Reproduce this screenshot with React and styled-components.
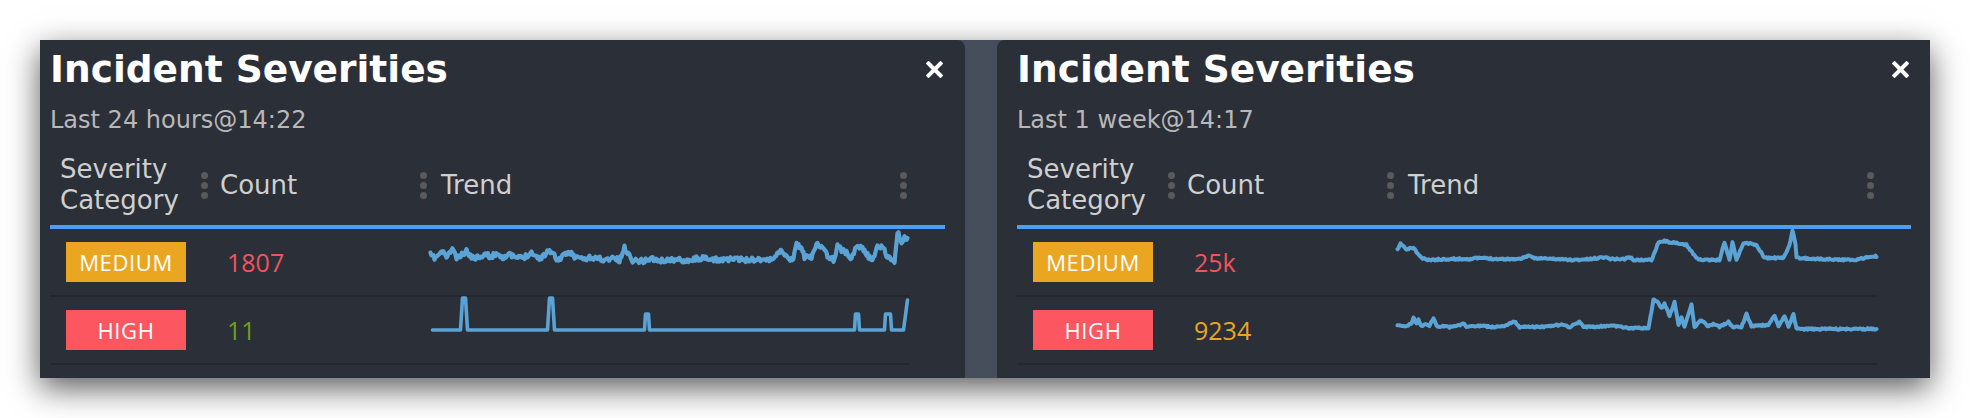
import React from 'react';
import styled, { createGlobalStyle } from 'styled-components';

const GlobalStyle = createGlobalStyle`
  html, body {
    margin: 0;
    padding: 0;
    background: #ffffff;
  }
  body {
    font-family: "DejaVu Sans", "Open Sans", sans-serif;
  }
`;

const Page = styled.div`
  width: 1970px;
  height: 418px;
  padding: 40px 40px 0 40px;
  box-sizing: border-box;
  overflow: hidden;
`;

const Board = styled.div`
  display: flex;
  gap: 32px;
  height: 338px;
  background: linear-gradient(90deg, #3c4250 0%, #464d5b 20%, #464d5b 80%, #3c4250 100%);
  background-color: #434a58;
  box-shadow: 0 10px 30px rgba(0, 0, 0, 0.65);
`;

const Panel = styled.section`
  width: ${p => p.$width}px;
  box-sizing: border-box;
  padding: 7px ${p => p.$padRight}px 0 ${p => p.$padLeft}px;
  background: #2b2f38;
  border-radius: ${p => (p.$side === 'left' ? '0 8px 0 0' : '8px 0 0 0')};
`;

const TitleRow = styled.div`
  display: flex;
  align-items: center;
  justify-content: space-between;
  height: 44px;
`;

const Title = styled.h2`
  margin: 0;
  font-size: 37.5px;
  font-weight: 700;
  line-height: 44px;
  color: #ffffff;
`;

const Close = styled.button`
  display: flex;
  padding: 0;
  margin-right: 2px;
  border: 0;
  background: none;
  cursor: pointer;
`;

const Subtitle = styled.div`
  margin-top: 13px;
  font-size: 24px;
  line-height: 32px;
  color: #b8b8b8;
`;

const Header = styled.div`
  margin-top: 9px;
  height: 80px;
  border-bottom: 4px solid #4a9ff5;
  display: grid;
  grid-template-columns: 151px 219px 490px;
  align-items: center;
`;

const HeadCell = styled.div`
  display: flex;
  align-items: center;
  gap: 12px;
  padding-left: ${p => p.$pad || 0}px;
  font-size: 26px;
  line-height: 31px;
  color: #cfcfcf;
`;

const TrendHead = styled(HeadCell)`
  justify-content: space-between;
  padding-right: 3px;
`;

const HeadLabel = styled.div`
  display: flex;
  align-items: center;
  gap: 14px;
`;

const Grip = styled.span`
  display: flex;
  flex-direction: column;
  gap: 3px;

  &::before, &::after, & > i {
    content: '';
    display: block;
    width: 7px;
    height: 7px;
    border-radius: 50%;
    background: #5a5a5a;
  }
`;

const Row = styled.div`
  width: 860px;
  height: 66px;
  display: grid;
  grid-template-columns: 151px 219px 490px;
  align-items: center;
  border-bottom: 2px solid #23272f;
`;

const Badge = styled.span`
  width: 120px;
  height: 40px;
  margin-left: 16px;
  display: flex;
  align-items: center;
  justify-content: center;
  background: ${p => p.$bg};
  color: #ffffff;
  font-family: "Open Sans", "DejaVu Sans", sans-serif;
  font-size: 22px;
  letter-spacing: 0.6px;
`;

const Count = styled.div`
  padding-left: 26px;
  font-family: "Open Sans", "DejaVu Sans", sans-serif;
  font-size: 25px;
  color: ${p => p.$color};
`;

const TrendCell = styled.div`
  align-self: start;
  padding-left: 10px;

  svg {
    display: block;
    overflow: visible;
  }
`;

const rnd = seed => () => {
  seed = (seed * 16807) % 2147483647;
  return seed / 2147483647;
};

function buildPoints(points, ox, oy, amp, seed) {
  const r = rnd(seed);
  const out = [];
  for (let i = 0; i < points.length - 1; i++) {
    const [x1, y1] = points[i];
    const [x2, y2] = points[i + 1];
    const n = Math.max(1, Math.round(Math.abs(x2 - x1) / 1.1));
    for (let k = 0; k < n; k++) {
      const t = k / n;
      const x = x1 + (x2 - x1) * t;
      const y = y1 + (y2 - y1) * t + (amp ? (r() * 2 - 1) * amp : 0);
      out.push(`${(x - ox).toFixed(1)},${(y - oy).toFixed(1)}`);
    }
  }
  const [lx, ly] = points[points.length - 1];
  out.push(`${(lx - ox).toFixed(1)},${(ly - oy).toFixed(1)}`);
  return out.join(' ');
}

function Sparkline({ data, ox, oy, amp = 0, seed = 7, weight = 3.2 }) {
  return (
    <svg width="480" height="40" viewBox="0 0 480 40">
      <polyline
        points={buildPoints(data, ox, oy, amp, seed)}
        fill="none"
        stroke="#5aa3d4"
        strokeWidth={weight}
        strokeLinejoin="round"
        strokeLinecap="round"
      />
    </svg>
  );
}

const p1Medium = [
  [431, 255], [435, 258], [443, 252], [448, 257], [453, 248], [457, 258], [460, 257], [467, 251],
  [473, 258], [478, 257], [485, 254], [492, 257], [497, 253], [503, 257], [510, 255], [518, 258],
  [525, 257], [532, 252], [538, 258], [543, 257], [549, 250], [553, 253], [558, 260], [563, 257],
  [568, 253], [572, 252], [575, 258], [580, 257], [585, 260], [590, 257], [593, 260], [598, 257],
  [605, 261], [613, 257], [620, 261], [625, 248], [628, 252], [632, 260], [645, 261], [652, 258],
  [658, 261], [670, 260], [690, 260], [700, 258], [712, 260], [730, 259], [745, 260], [760, 259],
  [772, 260], [780, 251], [785, 254], [793, 261], [797, 245], [802, 248], [805, 257], [812, 258],
  [817, 243], [820, 245], [825, 252], [830, 258], [835, 260], [838, 243], [842, 250], [847, 253],
  [852, 258], [858, 245], [863, 248], [868, 255], [873, 262], [878, 245], [883, 247], [888, 257],
  [895, 262], [898, 231], [902, 245], [905, 238], [908, 238],
];

const p1High = [
  [433, 330], [461, 330], [463, 298], [466, 298], [468, 330], [548, 330], [550, 298], [553, 298],
  [555, 330], [645, 330], [646, 314], [649, 314], [650, 330], [855, 330], [856, 314], [859, 314],
  [860, 330], [885, 330], [886, 314], [891, 314], [892, 330], [904, 330], [908, 300],
];

const p2Medium = [
  [1398, 250], [1401, 244], [1404, 246], [1407, 250], [1411, 248], [1414, 248], [1417, 252],
  [1422, 258], [1428, 260], [1450, 259], [1470, 259], [1480, 258], [1500, 259], [1520, 259],
  [1528, 256], [1535, 258], [1555, 259], [1575, 260], [1592, 259], [1605, 257], [1612, 259],
  [1625, 259], [1630, 257], [1634, 260], [1652, 260], [1659, 242], [1665, 241], [1675, 243],
  [1687, 245], [1697, 258], [1702, 260], [1720, 260], [1725, 242], [1730, 260], [1733, 242],
  [1737, 260], [1744, 243], [1748, 243], [1757, 245], [1765, 258], [1784, 258], [1790, 245],
  [1793, 230], [1796, 245], [1797, 258], [1820, 259], [1855, 260], [1865, 258], [1875, 256],
  [1877, 257],
];

const p2High = [
  [1398, 326], [1405, 326], [1412, 324], [1414, 317], [1417, 324], [1419, 320], [1422, 326],
  [1426, 324], [1430, 326], [1434, 318], [1437, 326], [1450, 327], [1464, 324], [1468, 327],
  [1480, 326], [1495, 327], [1505, 326], [1515, 321], [1520, 327], [1540, 327], [1550, 326],
  [1562, 325], [1570, 327], [1580, 322], [1584, 327], [1620, 326], [1625, 328], [1649, 328],
  [1654, 300], [1659, 303], [1662, 308], [1665, 304], [1670, 316], [1675, 302], [1679, 325],
  [1682, 318], [1685, 327], [1692, 305], [1695, 327], [1702, 320], [1708, 326], [1715, 324],
  [1720, 327], [1729, 322], [1733, 327], [1742, 327], [1747, 314], [1752, 326], [1769, 325],
  [1775, 316], [1779, 326], [1785, 316], [1789, 327], [1794, 314], [1797, 329], [1877, 329],
];

const panels = [
  {
    side: 'left',
    width: 925,
    padLeft: 10,
    padRight: 20,
    subtitle: 'Last 24 hours@14:22',
    ox: 430.5,
    rows: [
      { level: 'MEDIUM', bg: '#eba621', count: '1807', color: '#f0545c', data: p1Medium, amp: 2.4, weight: 4.2, oy: 229 },
      { level: 'HIGH', bg: '#fc5660', count: '11', color: '#6aa11a', data: p1High, amp: 0, weight: 3.6, oy: 297 },
    ],
  },
  {
    side: 'right',
    width: 933,
    padLeft: 20,
    padRight: 19,
    subtitle: 'Last 1 week@14:17',
    ox: 1397.5,
    rows: [
      { level: 'MEDIUM', bg: '#eba621', count: '25k', color: '#f0545c', data: p2Medium, amp: 0.8, weight: 4, oy: 229 },
      { level: 'HIGH', bg: '#fc5660', count: '9234', color: '#eba621', data: p2High, amp: 0.8, weight: 4, oy: 297 },
    ],
  },
];

function CloseIcon() {
  return (
    <svg width="17" height="17" viewBox="0 0 17 17">
      <path d="M2.5 2.5 L14.5 14.5 M14.5 2.5 L2.5 14.5" stroke="#ffffff" strokeWidth="4" strokeLinecap="square" />
    </svg>
  );
}

function SeverityPanel({ panel }) {
  return (
    <Panel $width={panel.width} $padLeft={panel.padLeft} $padRight={panel.padRight} $side={panel.side}>
      <TitleRow>
        <Title>Incident Severities</Title>
        <Close aria-label="close"><CloseIcon /></Close>
      </TitleRow>
      <Subtitle>{panel.subtitle}</Subtitle>
      <Header>
        <HeadCell $pad={10}>Severity<br />Category</HeadCell>
        <HeadCell>
          <Grip><i /></Grip>
          Count
        </HeadCell>
        <TrendHead>
          <HeadLabel>
            <Grip><i /></Grip>
            Trend
          </HeadLabel>
          <Grip><i /></Grip>
        </TrendHead>
      </Header>
      {panel.rows.map((row, i) => (
        <Row key={row.level}>
          <Badge $bg={row.bg}>{row.level}</Badge>
          <Count $color={row.color}>{row.count}</Count>
          <TrendCell>
            <Sparkline
              data={row.data}
              ox={panel.ox}
              oy={row.oy}
              amp={row.amp}
              weight={row.weight}
              seed={11 + i * 5}
            />
          </TrendCell>
        </Row>
      ))}
    </Panel>
  );
}

export default function App() {
  return (
    <>
      <GlobalStyle />
      <Page>
        <Board>
          {panels.map(p => (
            <SeverityPanel key={p.subtitle} panel={p} />
          ))}
        </Board>
      </Page>
    </>
  );
}
